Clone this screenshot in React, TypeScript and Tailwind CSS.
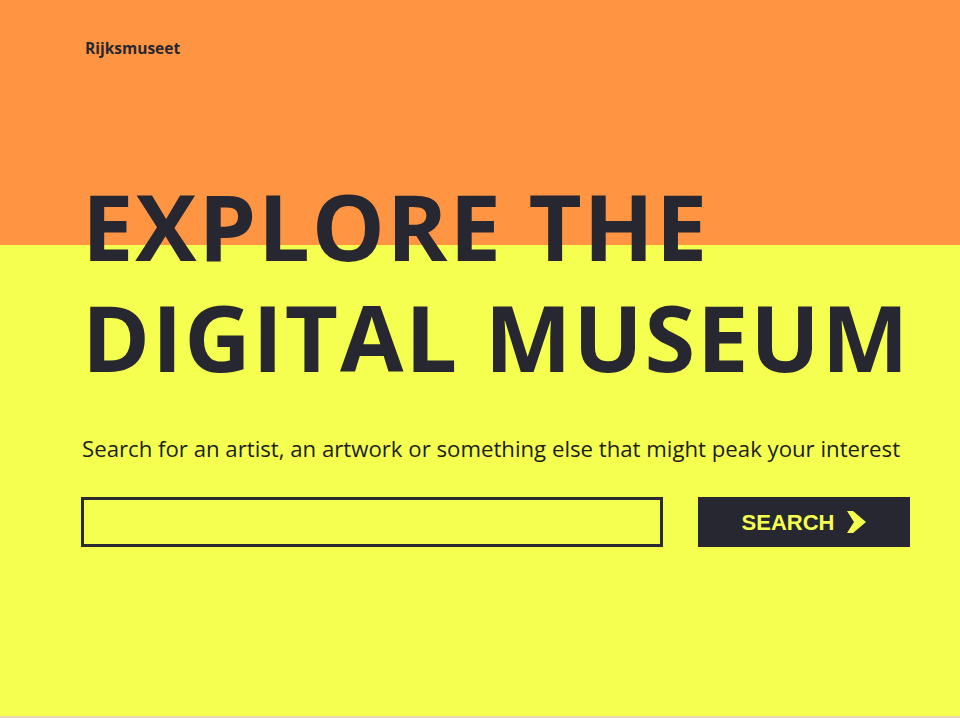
export default function App() {
  return (
    <div className="flex h-[718px] w-full flex-col bg-[#e8d6b4]">
      <div className="h-[716px] bg-[linear-gradient(to_bottom,#ff9543_245px,#f5ff50_245px)] pl-[85px] text-[#262730]">
        <div className="pt-[39px] font-['Open_Sans',sans-serif] text-[15.5px] font-bold leading-[18px]">Rijksmuseet</div>
        <h1 className="mt-[113px] -ml-[3px] whitespace-nowrap font-['Open_Sans',sans-serif] text-[92px] font-bold leading-[111px] tracking-[1.8px]">
          <div>EXPLORE THE</div>
          <div>DIGITAL MUSEUM</div>
        </h1>
        <p className="mt-[43px] -ml-[3px] whitespace-nowrap font-['Open_Sans',sans-serif] text-[22.2px] leading-[28px] text-[#1d1d20]">
          Search for an artist, an artwork or something else that might peak your interest
        </p>
        <form className="mt-[34px] -ml-[4px] flex items-center gap-[35px]" onSubmit={(e) => e.preventDefault()}>
          <input
            type="text"
            className="h-[50px] w-[582px] border-[3px] border-[#2a2b31] bg-transparent px-3 font-['Open_Sans',sans-serif] text-[18px] outline-none"
          />
          <button
            type="submit"
            className="flex h-[50px] w-[212px] items-center justify-center gap-[13px] bg-[#262730] font-['Liberation_Sans',Arial,sans-serif] text-[22px] font-bold text-[#f5ff50]"
          >
            SEARCH
            <svg width="19" height="22" viewBox="0 0 19 22" fill="#f5ff50">
              <path d="M0 0 H6 L19 11 L6 22 H0 L7 11 Z" />
            </svg>
          </button>
        </form>
      </div>
    </div>
  );
}
